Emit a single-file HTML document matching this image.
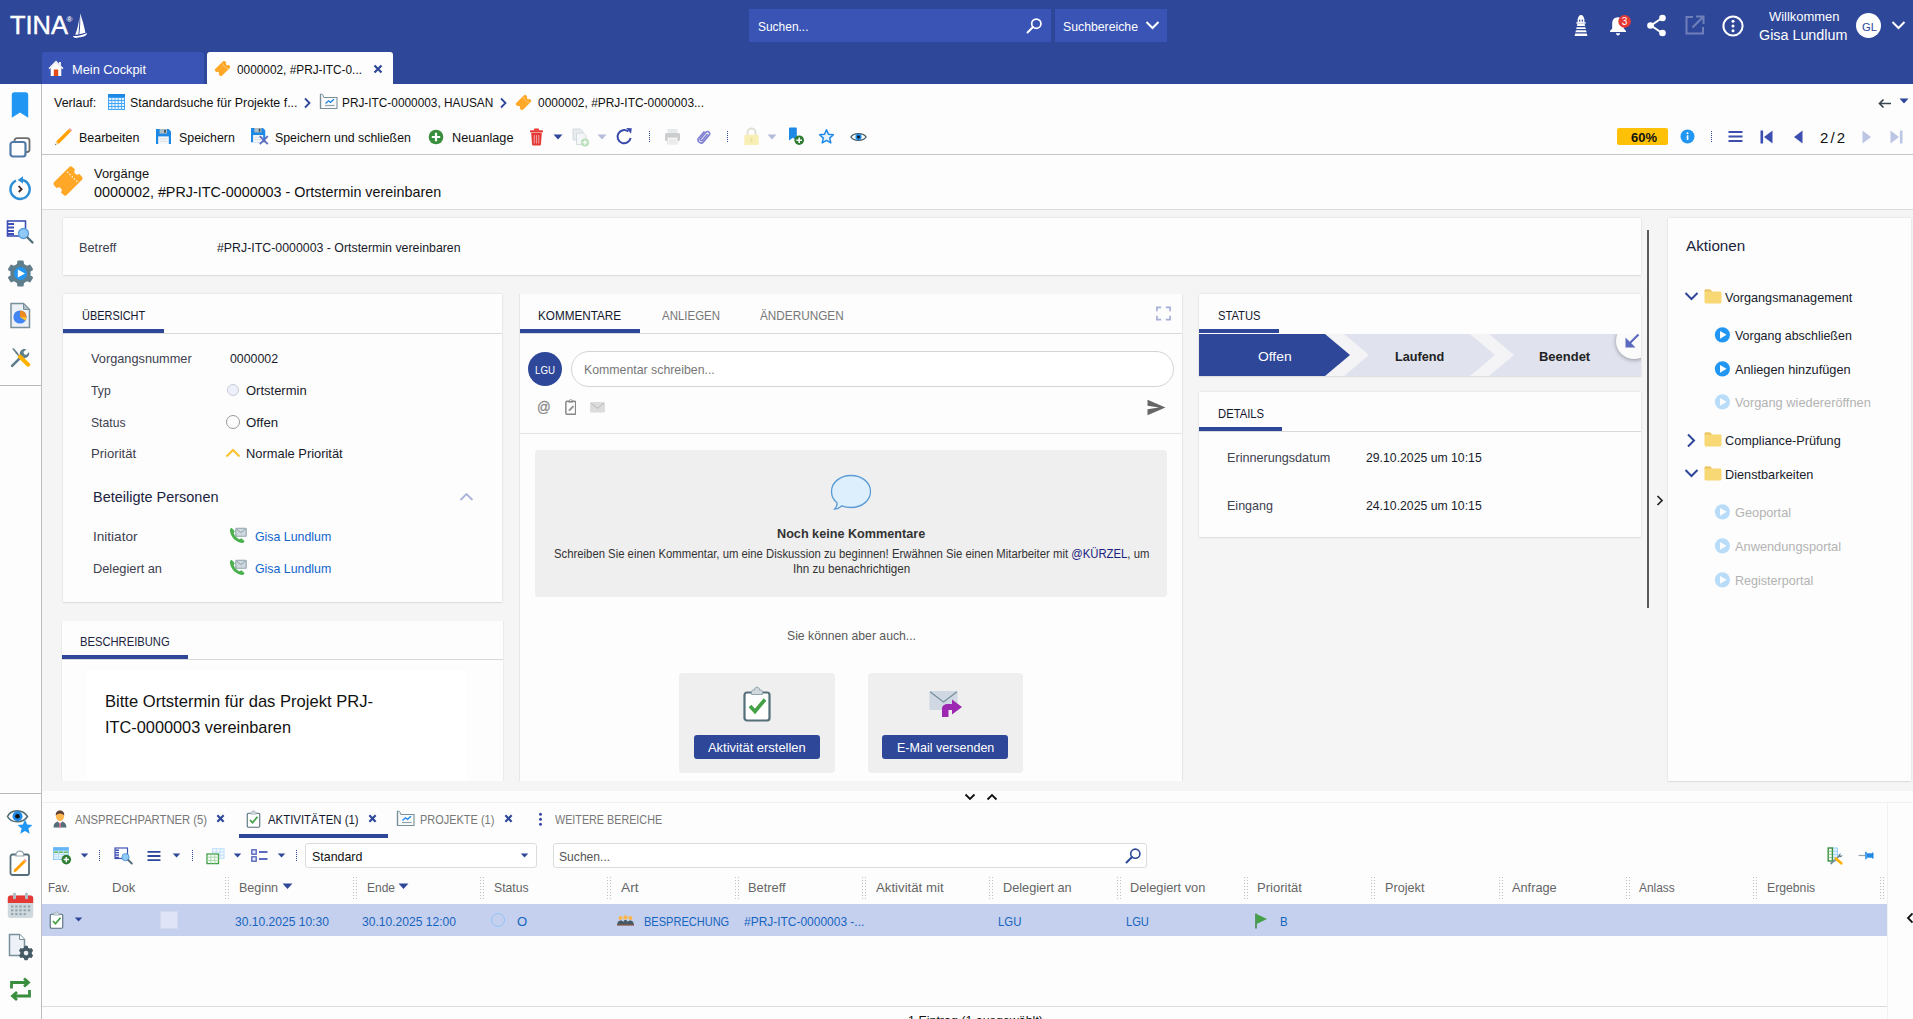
<!DOCTYPE html>
<html lang="de"><head><meta charset="utf-8"><title>TINA</title>
<style>
*{box-sizing:border-box;margin:0;padding:0}
html,body{width:1913px;height:1019px;overflow:hidden;background:#fdfdfd}
body{font-family:"Liberation Sans",sans-serif;font-size:13px;color:#111;position:relative}
.a{position:absolute}
.t{position:absolute;transform-origin:0 0;margin-top:1px;white-space:nowrap;line-height:16px;height:16px}
#hdr{left:0;top:0;width:1913px;height:84px;background:#2e4799}
#side{left:0;top:84px;width:42px;height:935px;background:#fdfdfd;border-right:1px solid #bdbdbd}
#content{left:42px;top:210px;width:1871px;height:581px;background:#f5f5f5}
.card{position:absolute;background:#fdfdfd;box-shadow:0 0 2px rgba(0,0,0,.13),0 1px 1px rgba(0,0,0,.05)}
.hl{position:absolute;height:1px;background:#d9d9d9}
.vsep{width:0;height:11px;margin-top:1px;border-left:1px dotted #2e4799}
.grip{position:absolute;top:876px;width:6px;height:24px;background-image:radial-gradient(circle,#bcbcbc 0.7px,transparent 1px);background-size:3px 3px}
.tabu{position:absolute;height:4px;background:#2e4799}
</style></head><body>
<!--HEADER-->
<svg width="0" height="0" style="position:absolute"><defs>
<g id="ticket"><g transform="rotate(-45 16 16)"><path d="M5.5 7 H26.5 A2.5 2.5 0 0 1 29 9.5 V13.2 A2.8 2.8 0 0 0 29 18.8 V22.5 A2.5 2.5 0 0 1 26.5 25 H5.5 A2.5 2.5 0 0 1 3 22.5 V18.8 A2.8 2.8 0 0 0 3 13.2 V9.5 A2.5 2.5 0 0 1 5.5 7 Z" fill="#ffa726"/><g fill="#fff6e6"><circle cx="22" cy="9.6" r=".8"/><circle cx="22" cy="12.8" r=".8"/><circle cx="22" cy="16" r=".8"/><circle cx="22" cy="19.2" r=".8"/><circle cx="22" cy="22.4" r=".8"/></g></g></g>
<g id="save"><path d="M0 0 H12.6 L15 2.4 V15 H0Z" fill="#1e88e5"/><rect x="3.6" y="0" width="7.4" height="4.6" fill="#b0bec5"/><rect x="8.2" y=".8" width="1.6" height="3" fill="#37474f"/><rect x="2.2" y="7.4" width="10.6" height="7.6" fill="#f5f7fa"/><path d="M3.5 9.8 H11.5 M3.5 12.2 H11.5" stroke="#cfd8dc" stroke-width=".8"/></g>
<g id="prj"><path d="M1.5 3 V15.5 H18 V4.5 H5" fill="#fafafa" stroke="#78909c" stroke-width="1.1"/><path d="M1.5 1 V15.5" stroke="#78909c" stroke-width="1.3"/><path d="M1.5 1 C3.5 1 4.5 2 4.5 4.5" fill="none" stroke="#78909c" stroke-width="1"/><path d="M6 12.5 H15.5" stroke="#90a4ae" stroke-width="1.2"/><path d="M6.5 10.5 L9.5 7.8 L11.5 9.3 L15 6.3" fill="none" stroke="#1e88e5" stroke-width="1.3"/></g>
<g id="gear"><path d="M10.93 4.67 L11.34 1.49 L15.66 1.49 L16.07 4.67 L19.87 6.86 L22.82 5.63 L24.98 9.37 L22.43 11.31 L22.43 15.69 L24.98 17.63 L22.82 21.37 L19.87 20.14 L16.07 22.33 L15.66 25.51 L11.34 25.51 L10.93 22.33 L7.13 20.14 L4.18 21.37 L2.02 17.63 L4.57 15.69 L4.57 11.31 L2.02 9.37 L4.18 5.63 L7.13 6.86Z" stroke-linejoin="round" stroke-width="2" stroke="inherit"/><circle cx="13.5" cy="13.5" r="9.4"/></g>
<g id="phone"><rect x="6.8" y="1.3" width="10.4" height="8" rx=".8" fill="#cfd8dc" stroke="#90a4ae" stroke-width="1.1"/><path d="M7.3 2 L12 5.6 L16.7 2" fill="none" stroke="#90a4ae" stroke-width="1"/><path d="M2.8 1 C1.5 1.3 .8 2 .9 3.2 C1.3 9.5 6.5 15 13 16 C14.3 16.1 15.2 15.3 15.5 14 L12.3 11.3 L10.5 12.3 C8 11.3 5.5 8.5 4.7 6 L5.8 4.3Z" fill="#4caf50"/></g>
<g id="clipchk"><rect x="1.5" y="6.5" width="25" height="28" rx="2.5" fill="#fff" stroke="#546e7a" stroke-width="2.2"/><path d="M8.5 8.5 V6 C8.5 4.7 9.3 4 10.5 4 H11.5 C11.5 2.3 12.5 1.2 14 1.2 C15.5 1.2 16.5 2.3 16.5 4 H17.5 C18.7 4 19.5 4.7 19.5 6 V8.5Z" fill="#cfd8dc" stroke="#90a4ae" stroke-width="1"/><path d="M7 20 L12 25.5 L22 13.5" fill="none" stroke="#43a047" stroke-width="3.6"/></g>
<g id="folder"><path d="M.5 2 C.5 1.2 1.1 .6 1.9 .6 H6.2 L8 2.6 H16.1 C16.9 2.6 17.5 3.2 17.5 4 V13 C17.5 13.8 16.9 14.4 16.1 14.4 H1.9 C1.1 14.4 .5 13.8 .5 13Z" fill="#f8d775"/><path d="M.5 2.6 V2 C.5 1.2 1.1 .6 1.9 .6 H6.2 L8 2.6Z" fill="#e9c467"/></g>
<g id="play"><circle cx="8.4" cy="7.8" r="7.6" fill="#2196f3"/><path d="M6 3.9 L12.6 7.8 L6 11.7 Z" fill="#fff"/></g>
</defs></svg>
<div class="a" id="hdr"></div>
<div class="t" style="transform:scaleX(0.9792);left:9.5px;top:9px;font-size:26px;line-height:30px;height:30px;color:#fff;-webkit-text-stroke:.45px #fff" id="logo">TINA</div>
<div class="t" style="left:66.5px;top:14.5px;font-size:8px;line-height:8px;height:8px;color:#fff;font-weight:bold">®</div>
<svg class="a" style="left:72px;top:12px" width="17" height="27" viewBox="0 0 17 27"><path d="M8 1.2 C10.5 8 12.5 15 13.4 20.8 L7.3 22.3 C8.3 15 8.5 8 8 1.2 Z" fill="#fff"/><path d="M7.4 4.7 C6.8 11 5.3 17.5 3.2 22.8 L6.4 22.4 C7.1 16 7.5 10 7.4 4.7Z" fill="#fff"/><path d="M0.9 24.1 C5.5 24.3 11 22.9 15.2 21 C14.6 23.1 13.1 24.3 10.8 24.8 L3.6 26 C2.3 25.8 1.3 25.1 0.9 24.1Z" fill="#fff"/></svg>
<div class="a" style="left:42px;top:52px;width:162px;height:32px;background:#3a54b5;border-radius:3px 3px 0 0"></div>
<div class="a" style="left:207px;top:52px;width:186px;height:32px;background:#fdfdfd;border-radius:3px 3px 0 0"></div>
<svg class="a" style="left:48px;top:60px" width="16" height="17" viewBox="0 0 16 17"><path d="M8 1 L15 8 L13.3 8 L13.3 16 L2.7 16 L2.7 8 L1 8 Z" fill="#fff"/><path d="M8 0.5 L15.5 8.2 L14.3 9.3 L8 3 L1.7 9.3 L0.5 8.2 Z" fill="#e9e9ef"/><rect x="5.8" y="9.5" width="4.4" height="6.5" fill="#e64a19"/><rect x="11" y="2" width="2" height="3.5" fill="#e9e9ef"/></svg>
<div class="t" style="transform:scaleX(0.9848);left:71.5px;top:61px;color:#fff" id="t_cockpit">Mein Cockpit</div>
<svg class="a tk" style="left:214px;top:60px" width="17" height="17" viewBox="0 0 32 32"><use href="#ticket"/></svg>
<div class="t" style="transform:scaleX(0.9104);left:236.5px;top:61px;color:#111" id="t_tab2">0000002, #PRJ-ITC-0...</div>
<svg class="a" style="left:373px;top:64px" width="10" height="10" viewBox="0 0 10 10"><path d="M1.5 1.5 L8.5 8.5 M8.5 1.5 L1.5 8.5" stroke="#2e4799" stroke-width="2.2"/></svg>
<!--search-->
<div class="a" style="left:749px;top:9px;width:302px;height:33px;background:#3a54b5"></div>
<div class="a" style="left:1055px;top:9px;width:112px;height:33px;background:#3a54b5"></div>
<div class="t" style="transform:scaleX(0.9192);left:757.5px;top:18px;color:#fff" id="t_suchen">Suchen...</div>
<svg class="a" style="left:1026px;top:17px" width="17" height="17" viewBox="0 0 17 17"><circle cx="10.3" cy="6.7" r="4.6" fill="none" stroke="#fff" stroke-width="1.7"/><path d="M7 10 L1.5 15.5" stroke="#fff" stroke-width="1.9" stroke-linecap="round"/></svg>
<div class="t" style="transform:scaleX(0.9434);left:1062.5px;top:18px;color:#fff" id="t_suchb">Suchbereiche</div>
<svg class="a" style="left:1145px;top:20px" width="15" height="11" viewBox="0 0 15 11"><path d="M1.5 2 L7.5 8 L13.5 2" fill="none" stroke="#fff" stroke-width="2"/></svg>
<!--right icons-->
<svg class="a" style="left:1572.6px;top:14px" width="16" height="24" viewBox="0 0 16 24"><path d="M5 4.9 C5 2.6 6.2 .9 8 .9 C9.8 .9 11 2.6 11 4.9Z" fill="#fff"/><rect x="4.6" y="4.6" width="6.8" height="4" fill="#fff"/><rect x="6.1" y="5.6" width="1.2" height="2" fill="#2e4799"/><rect x="8.7" y="5.6" width="1.2" height="2" fill="#2e4799"/><rect x="3.4" y="8.2" width="9.2" height="1.5" fill="#fff"/><path d="M4.4 9.7 H11.6 L14.4 22 H1.6Z" fill="#fff"/><path d="M0 12.6 H16 M0 15.7 H16 M0 18.8 H16" stroke="#2e4799" stroke-width="1.2"/></svg>
<svg class="a" style="left:1608px;top:14px" width="24" height="24" viewBox="0 0 24 24"><path d="M10 3.2 C13.8 3.2 15.8 6 15.8 9.5 L15.8 14.5 L18 17 L18 18 L2 18 L2 17 L4.2 14.5 L4.2 9.5 C4.2 6 6.2 3.2 10 3.2Z" fill="#fff"/><path d="M8 19.3 L12 19.3 C12 20.6 11.2 21.5 10 21.5 C8.8 21.5 8 20.6 8 19.3Z" fill="#fff"/><circle cx="16.6" cy="7.4" r="6.3" fill="#e53935"/></svg>
<div class="t" style="left:1621.8px;top:15px;font-size:10px;line-height:12px;height:12px;color:#fff">3</div>
<svg class="a" style="left:1645px;top:13px" width="24" height="26" viewBox="0 0 24 26"><path d="M17 5 L6 12.5 L17 20" fill="none" stroke="#fff" stroke-width="2"/><circle cx="17.5" cy="5" r="3.3" fill="#fff"/><circle cx="5.5" cy="12.5" r="3.3" fill="#fff"/><circle cx="17.5" cy="20" r="3.3" fill="#fff"/></svg>
<svg class="a" style="left:1684px;top:14.3px" width="22" height="22" viewBox="0 0 22 22"><path d="M9 3 L2.5 3 L2.5 19.5 L19 19.5 L19 13" fill="none" stroke="#6f80b9" stroke-width="2"/><path d="M12 2.5 L19.5 2.5 L19.5 10 M19 3 L8.5 13.5" fill="none" stroke="#6f80b9" stroke-width="2"/></svg>
<svg class="a" style="left:1720.5px;top:13.5px" width="24" height="24" viewBox="0 0 24 24"><circle cx="12" cy="12" r="9.6" fill="none" stroke="#fff" stroke-width="2"/><circle cx="12" cy="7.3" r="1.5" fill="#fff"/><circle cx="12" cy="12" r="1.5" fill="#fff"/><circle cx="12" cy="16.7" r="1.5" fill="#fff"/></svg>
<div class="t" style="transform:scaleX(0.9958);left:1769.0px;top:8px;color:#fff" id="t_willk">Willkommen</div>
<div class="t" style="transform:scaleX(0.9243);left:1759.3px;top:25px;font-size:15.5px;line-height:18px;height:18px;color:#fff" id="t_gisa">Gisa Lundlum</div>
<div class="a" style="left:1856px;top:13px;width:25px;height:25px;border-radius:13px;background:#fff"></div>
<div class="t" style="transform:scaleX(1.0213);left:1861.5px;top:19px;font-size:11px;line-height:14px;height:14px;color:#2e4799" id="t_gl">GL</div>
<svg class="a" style="left:1891px;top:20px" width="15" height="11" viewBox="0 0 15 11"><path d="M1.5 2 L7.5 8 L13.5 2" fill="none" stroke="#fff" stroke-width="2"/></svg>
<!--BREADCRUMB-->
<div class="t" style="transform:scaleX(0.9593);left:53.5px;top:94px" id="b1">Verlauf:</div>
<svg class="a" style="left:108px;top:94px" width="17" height="16" viewBox="0 0 17 16"><rect x="0" y="0" width="17" height="16" fill="#42a5f5"/><rect x="0" y="0" width="17" height="3.2" fill="#1e88e5"/><g fill="#e3f2fd"><rect x="1" y="4" width="2.4" height="2"/><rect x="4.2" y="4" width="2.4" height="2"/><rect x="7.4" y="4" width="2.4" height="2"/><rect x="10.6" y="4" width="2.4" height="2"/><rect x="13.8" y="4" width="2.2" height="2"/><rect x="1" y="7" width="2.4" height="2"/><rect x="4.2" y="7" width="2.4" height="2"/><rect x="7.4" y="7" width="2.4" height="2"/><rect x="10.6" y="7" width="2.4" height="2"/><rect x="13.8" y="7" width="2.2" height="2"/><rect x="1" y="10" width="2.4" height="2"/><rect x="4.2" y="10" width="2.4" height="2"/><rect x="7.4" y="10" width="2.4" height="2"/><rect x="10.6" y="10" width="2.4" height="2"/><rect x="13.8" y="10" width="2.2" height="2"/><rect x="1" y="13" width="2.4" height="2"/><rect x="4.2" y="13" width="2.4" height="2"/><rect x="7.4" y="13" width="2.4" height="2"/><rect x="10.6" y="13" width="2.4" height="2"/><rect x="13.8" y="13" width="2.2" height="2"/></g></svg>
<div class="t" style="transform:scaleX(0.9538);left:129.7px;top:94px" id="b2">Standardsuche für Projekte f...</div>
<svg class="a chev" style="left:303px;top:97px" width="9" height="12" viewBox="0 0 9 12"><path d="M2 1.5 L6.5 6 L2 10.5" fill="none" stroke="#2e4799" stroke-width="1.8"/></svg>
<svg class="a" style="left:319px;top:93px" width="19" height="17" viewBox="0 0 19 17"><use href="#prj"/></svg>
<div class="t" style="transform:scaleX(0.9105);left:342.2px;top:94px" id="b3">PRJ-ITC-0000003, HAUSAN</div>
<svg class="a chev" style="left:499px;top:97px" width="9" height="12" viewBox="0 0 9 12"><path d="M2 1.5 L6.5 6 L2 10.5" fill="none" stroke="#2e4799" stroke-width="1.8"/></svg>
<svg class="a" style="left:515px;top:94px" width="17" height="17" viewBox="0 0 32 32"><use href="#ticket"/></svg>
<div class="t" style="transform:scaleX(0.9188);left:537.5px;top:94px" id="b4">0000002, #PRJ-ITC-0000003...</div>
<svg class="a" style="left:1877px;top:97px" width="16" height="12" viewBox="0 0 16 12"><path d="M14 6.5 L3 6.5 M6.5 2.5 L2.5 6.5 L6.5 10.5" fill="none" stroke="#37474f" stroke-width="1.7"/></svg>
<svg class="a" style="left:1899px;top:98px" width="10" height="6" viewBox="0 0 10 6"><path d="M0.5 0.5 L9.5 0.5 L5 5.5Z" fill="#2e4799"/></svg>
<!--TOOLBAR-->
<svg class="a" style="left:54px;top:127px" width="19" height="19" viewBox="0 0 19 19"><path d="M14.6 2.2 L17 4.6 L4.6 17 L2.2 14.6 Z" fill="#ffa000"/><path d="M2.2 14.6 L4.6 17 L.9 18.3 Z" fill="#f3d9a8"/><path d="M.9 18.3 L1.4 16.9 L2.3 17.8Z" fill="#37474f"/><path d="M14.6 2.2 L15.8 1 L18.2 3.4 L17 4.6Z" fill="#ef9a9a"/></svg>
<div class="t" style="transform:scaleX(0.9604);left:78.7px;top:129px" id="tb1">Bearbeiten</div>
<svg class="a" style="left:156px;top:129px" width="15" height="15" viewBox="0 0 15 15"><use href="#save"/></svg>
<div class="t" style="transform:scaleX(0.9531);left:179.1px;top:129px" id="tb2">Speichern</div>
<svg class="a" style="left:251px;top:128px" width="18" height="17" viewBox="0 0 18 17"><g transform="scale(.95)"><use href="#save"/></g><path d="M8.8 8.2 L16.8 16.2 M16.8 8.2 L8.8 16.2" stroke="#5c6bc0" stroke-width="1.8"/></svg>
<div class="t" style="transform:scaleX(0.9497);left:275.1px;top:129px" id="tb3">Speichern und schließen</div>
<svg class="a" style="left:428px;top:129px" width="16" height="16" viewBox="0 0 16 16"><circle cx="8" cy="8" r="7.3" fill="#388e3c"/><path d="M8 3.8 V12.2 M3.8 8 H12.2" stroke="#fff" stroke-width="2.2"/></svg>
<div class="t" style="transform:scaleX(0.9779);left:451.5px;top:129px" id="tb4">Neuanlage</div>
<svg class="a" style="left:529px;top:128px" width="15" height="18" viewBox="0 0 15 18"><path d="M2.2 5 L12.8 5 L12 16 C12 17 11.3 17.5 10.5 17.5 L4.5 17.5 C3.7 17.5 3 17 3 16 Z" fill="#e53935"/><rect x="1" y="2.2" width="13" height="2.3" rx=".8" fill="#e53935"/><rect x="5" y=".6" width="5" height="2" rx=".6" fill="#e53935"/><path d="M5.3 7 V15.5 M7.5 7 V15.5 M9.7 7 V15.5" stroke="#ef9a9a" stroke-width="1.1"/></svg>
<svg class="a" style="left:553px;top:134px" width="10" height="6" viewBox="0 0 10 6"><path d="M0.5 0.5 L9.5 0.5 L5 5.5Z" fill="#2e4799"/></svg>
<svg class="a" style="left:572px;top:128px" width="18" height="19" viewBox="0 0 18 19" opacity=".45"><path d="M1 1 H8.5 L11 3.5 V12 H1Z" fill="#cfd8dc" stroke="#90a4ae" stroke-width=".8"/><path d="M4.5 5 H11.5 L14 7.5 V16.5 H4.5Z" fill="#eceff1" stroke="#90a4ae" stroke-width=".8"/><circle cx="13" cy="14.5" r="4" fill="#66bb6a"/><path d="M13 12.3 V16.7 M10.8 14.5 H15.2" stroke="#fff" stroke-width="1.3"/></svg>
<svg class="a" style="left:597px;top:134px" width="10" height="6" viewBox="0 0 10 6"><path d="M0.5 0.5 L9.5 0.5 L5 5.5Z" fill="#b4bcd9"/></svg>
<svg class="a" style="left:615px;top:127px" width="19" height="19" viewBox="0 0 19 19"><path d="M15.6 11 A6.6 6.6 0 1 1 13.3 4.6" fill="none" stroke="#3949ab" stroke-width="2"/><path d="M11.2 1 L16.8 1.2 L16 6.8 Z" fill="#3949ab"/></svg>
<div class="a vsep" style="left:649px;top:130px"></div>
<svg class="a" style="left:664px;top:128px" width="17" height="17" viewBox="0 0 17 17" opacity=".5"><rect x="3.5" y="1" width="10" height="5" fill="#cfd8dc"/><rect x="1" y="5" width="15" height="8" rx="1.5" fill="#9e9e9e"/><rect x="3.5" y="9.5" width="10" height="6.5" fill="#eceff1" stroke="#bdbdbd" stroke-width=".6"/><path d="M5 12 H12 M5 14 H12" stroke="#bdbdbd" stroke-width=".8"/></svg>
<svg class="a" style="left:695px;top:128px" width="18" height="17" viewBox="0 0 18 17"><g transform="rotate(40 9 8.5)" fill="none" stroke="#7e7fd0" stroke-width="1.6" stroke-linecap="round"><path d="M6 5 V13 A3 3 0 0 0 12 13 V3.5 A2.2 2.2 0 0 0 7.8 3.5 V12.5 A1.2 1.2 0 0 0 10.2 12.5 V5"/></g></svg>
<div class="a vsep" style="left:727px;top:130px"></div>
<svg class="a" style="left:743px;top:127px" width="17" height="19" viewBox="0 0 17 19" opacity=".55"><path d="M4.5 8 V5.5 A4 4 0 0 1 12.5 5.5 V8" fill="none" stroke="#c9c9b5" stroke-width="2"/><rect x="1.3" y="7.8" width="14.4" height="10.2" rx="1.2" fill="#f6e47a"/><rect x="7.6" y="10.5" width="1.8" height="4.5" fill="#d9c95a"/></svg>
<svg class="a" style="left:767px;top:134px" width="10" height="6" viewBox="0 0 10 6"><path d="M0.5 0.5 L9.5 0.5 L5 5.5Z" fill="#b4bcd9"/></svg>
<svg class="a" style="left:787px;top:127px" width="19" height="19" viewBox="0 0 19 19"><path d="M2 1.3 C2 .8 2.4 .4 3 .4 L8.8 .4 C9.4 .4 9.8 .8 9.8 1.3 L9.8 13.5 L5.9 10.8 L2 13.5Z" fill="#1e88e5"/><circle cx="12.2" cy="13.2" r="4.8" fill="#2e7d32"/><path d="M12.2 10.4 V16 M9.4 13.2 H15" stroke="#fff" stroke-width="1.5"/></svg>
<svg class="a" style="left:818px;top:128px" width="17" height="17" viewBox="0 0 17 17"><path d="M8.5 1.8 L10.5 6.3 L15.4 6.8 L11.7 10.1 L12.8 14.9 L8.5 12.4 L4.2 14.9 L5.3 10.1 L1.6 6.8 L6.5 6.3Z" fill="#e3f2fd" stroke="#1e88e5" stroke-width="1.5" stroke-linejoin="round"/></svg>
<svg class="a" style="left:850px;top:130.5px" width="17" height="12" viewBox="0 0 19 13"><path d="M1 6.5 C4 1.5 15 1.5 18 6.5 C15 11.5 4 11.5 1 6.5Z" fill="#fff" stroke="#455a64" stroke-width="1.5"/><circle cx="9.5" cy="6.5" r="3.5" fill="#1e88e5"/><circle cx="9.5" cy="6.5" r="1.6" fill="#111"/></svg>
<!--toolbar right-->
<div class="a" style="left:1617px;top:128px;width:51px;height:17px;background:#ffc107;border-radius:2px"></div>
<div class="t" style="transform:scaleX(0.9988);left:1630.5px;top:129px;font-weight:bold;color:#111" id="tb60">60%</div>
<svg class="a" style="left:1680px;top:129px" width="15" height="15" viewBox="0 0 15 15"><circle cx="7.5" cy="7.5" r="7" fill="#2196f3"/><rect x="6.7" y="6.3" width="1.7" height="4.6" fill="#fff"/><circle cx="7.5" cy="4.3" r="1" fill="#fff"/></svg>
<div class="a vsep" style="left:1711px;top:130px"></div>
<svg class="a" style="left:1728px;top:130px" width="15" height="13" viewBox="0 0 15 13"><path d="M.5 2 H14.5 M.5 6.5 H14.5 M.5 11 H14.5" stroke="#3c4fb0" stroke-width="1.8"/></svg>
<svg class="a" style="left:1760px;top:130px" width="13" height="14" viewBox="0 0 13 14"><rect x=".5" y=".5" width="2.6" height="13" fill="#3c4fb0"/><path d="M12.5 .5 V13.5 L4 7Z" fill="#3c4fb0"/></svg>
<svg class="a" style="left:1793px;top:130px" width="10" height="14" viewBox="0 0 10 14"><path d="M9.5 .5 V13.5 L1 7Z" fill="#3c4fb0"/></svg>
<div class="t" style="left:1820px;top:128px;font-size:15px;line-height:18px;height:18px;color:#111;letter-spacing:2.1px" id="tb22">2/2</div>
<svg class="a" style="left:1862px;top:130px" width="10" height="14" viewBox="0 0 10 14"><path d="M.5 .5 V13.5 L9 7Z" fill="#bcc5e3"/></svg>
<svg class="a" style="left:1890px;top:130px" width="13" height="14" viewBox="0 0 13 14"><rect x="9.9" y=".5" width="2.6" height="13" fill="#bcc5e3"/><path d="M.5 .5 V13.5 L9 7Z" fill="#bcc5e3"/></svg>
<div class="hl" style="left:42px;top:154px;width:1871px;background:#c4c4c4"></div>
<!--TITLE-->
<svg class="a" style="left:52px;top:165px" width="32" height="32" viewBox="0 0 32 32"><use href="#ticket"/></svg>
<div class="t" style="transform:scaleX(0.9915);left:94.1px;top:165px;color:#111" id="ti1">Vorgänge</div>
<div class="t" style="transform:scaleX(0.9573);left:94.1px;top:182px;font-size:15px;line-height:18px;height:18px;color:#111" id="ti2">0000002, #PRJ-ITC-0000003 - Ortstermin vereinbaren</div>
<div class="hl" style="left:42px;top:209px;width:1871px;background:#dcdcdc"></div>
<!--SIDE-->
<div class="a" id="side"></div>
<div class="hl" style="left:0;top:385px;width:41px;background:#b9b9b9"></div>
<div class="hl" style="left:0;top:793px;width:41px;background:#b9b9b9"></div>
<!--side icons top-->
<svg class="a" style="left:11px;top:92px" width="18" height="26" viewBox="0 0 18 26"><path d="M.8 2.8 C.8 1.2 1.8 .2 3.4 .2 L14.6 .2 C16.2 .2 17.2 1.2 17.2 2.8 L17.2 25.8 L9 20.6 L.8 25.8Z" fill="#2196f3"/></svg>
<svg class="a" style="left:9px;top:137px" width="22" height="21" viewBox="0 0 22 21"><rect x="5.5" y="1.2" width="15" height="13.8" rx="2.5" fill="#fdfdfd" stroke="#6e6e6e" stroke-width="1.8"/><rect x="1.5" y="5" width="15" height="14.5" rx="2.5" fill="#fdfdfd" stroke="#4f7aa8" stroke-width="2.2"/></svg>
<svg class="a" style="left:8px;top:176px" width="25" height="26" viewBox="0 0 25 26"><path d="M8 4.6 A9.6 9.6 0 1 0 13.5 3.8" fill="none" stroke="#2f8fd6" stroke-width="2.5"/><path d="M15 .2 L9.6 3.9 L15 7.6Z" fill="#2f8fd6"/><path d="M10.6 10 L13.6 13.2 L10.8 16" fill="none" stroke="#3e2723" stroke-width="1.8"/></svg>
<svg class="a" style="left:6px;top:219px" width="29" height="26" viewBox="0 0 29 26"><rect x="1.5" y="2" width="18" height="15" fill="#fff" stroke="#3f51b5" stroke-width="1.6"/><path d="M2 5 H8 M2 8.5 H8 M2 12 H8 M2 15 H8" stroke="#3f51b5" stroke-width="2"/><circle cx="17.5" cy="14.5" r="5" fill="#90caf9" stroke="#5c9bd6" stroke-width="1.3"/><path d="M21.5 18.5 L26.5 23.5" stroke="#546e7a" stroke-width="2.4" stroke-linecap="round"/></svg>
<svg class="a" style="left:7px;top:260px" width="27" height="27" viewBox="0 0 27 27"><use href="#gear" fill="#607d8b" stroke="#607d8b"/><circle cx="13.5" cy="13.5" r="6.5" fill="#2196f3"/><path d="M10.8 9.6 L18 13.5 L10.8 17.4Z" fill="#fff"/></svg>
<svg class="a" style="left:10px;top:302px" width="21" height="27" viewBox="0 0 21 27"><path d="M1 1.5 H13.5 L19.5 7.5 V25.5 H1Z" fill="#edf1f7" stroke="#78909c" stroke-width="1.5"/><path d="M13.5 1.5 V7.5 H19.5Z" fill="#b0bec5" stroke="#78909c" stroke-width="1"/><circle cx="10" cy="15" r="6.6" fill="#4285f4"/><path d="M10 15 L10 8.4 A6.6 6.6 0 0 1 16.6 15Z" fill="#ef8a1f"/><path d="M10 15 L16.6 15 A6.6 6.6 0 0 1 15.4 18.8Z" fill="#fbc02d"/></svg>
<svg class="a" style="left:10px;top:347px" width="21" height="21" viewBox="0 0 25 25"><path d="M2.5 22.5 L13 12" stroke="#607d8b" stroke-width="3.2" stroke-linecap="round"/><path d="M12 10 C11 7 12.5 3.5 16 2.5 C17 2.2 18.5 2.3 19.3 2.7 L16 6 L16.8 8.6 L19.4 9.4 L22.7 6.1 C23.3 8 22.8 10.5 21 12 C19 13.5 16.5 13.6 15 13Z" fill="#607d8b"/><path d="M2.5 2 L4.5 1.5 L9.5 7 L8 8.5Z" fill="#607d8b"/><path d="M7 6.5 L12.5 12" stroke="#607d8b" stroke-width="1.8"/><path d="M12 11.5 L21.5 21" stroke="#ffb300" stroke-width="5" stroke-linecap="round"/></svg>
<!--side icons bottom-->
<svg class="a" style="left:6px;top:808px" width="29" height="28" viewBox="0 0 29 28"><path d="M1.5 8.5 C5 1 17 1 21.5 8.5 C17 15.5 5 15.5 1.5 8.5Z" fill="#fff" stroke="#546e7a" stroke-width="1.6"/><circle cx="11.5" cy="8.3" r="5" fill="#1e88e5"/><circle cx="11.5" cy="8.3" r="2.3" fill="#111"/><path d="M19 11.5 L21.1 16.4 L26.5 16.9 L22.4 20.4 L23.7 25.7 L19 22.9 L14.3 25.7 L15.6 20.4 L11.5 16.9 L16.9 16.4Z" fill="#2196f3"/></svg>
<svg class="a" style="left:9px;top:850px" width="22" height="27" viewBox="0 0 22 27"><rect x="1.5" y="4.5" width="18.5" height="20.5" rx="2" fill="#fff" stroke="#546e7a" stroke-width="1.8"/><path d="M7 4.5 C7 2.5 8.5 1.2 10.8 1.2 C13 1.2 14.5 2.5 14.5 4.5 L14.5 6 L7 6Z" fill="#fff" stroke="#90a4ae" stroke-width="1.2"/><path d="M5.2 19.5 L14.8 9.9 L16.8 11.9 L7.2 21.5 L4.6 22.2Z" fill="#ffa000"/><path d="M14.8 9.9 L15.9 8.8 L17.9 10.8 L16.8 11.9Z" fill="#ef9a9a"/></svg>
<svg class="a" style="left:7px;top:892px" width="27" height="27" viewBox="0 0 27 27"><rect x=".8" y="3.5" width="25.4" height="22.5" rx="2.5" fill="#cfd8dc"/><path d="M.8 11 V6 C.8 4.6 1.9 3.5 3.3 3.5 H23.7 C25.1 3.5 26.2 4.6 26.2 6 V11Z" fill="#e53935"/><rect x="6" y=".8" width="3" height="6.4" rx="1.2" fill="#b0bec5"/><rect x="18" y=".8" width="3" height="6.4" rx="1.2" fill="#b0bec5"/><g fill="#90a4ae"><rect x="4" y="13.5" width="2.3" height="2"/><rect x="8.2" y="13.5" width="2.3" height="2"/><rect x="12.4" y="13.5" width="2.3" height="2"/><rect x="16.6" y="13.5" width="2.3" height="2"/><rect x="20.8" y="13.5" width="2.3" height="2"/><rect x="4" y="17.3" width="2.3" height="2"/><rect x="8.2" y="17.3" width="2.3" height="2"/><rect x="12.4" y="17.3" width="2.3" height="2"/><rect x="16.6" y="17.3" width="2.3" height="2"/><rect x="20.8" y="17.3" width="2.3" height="2"/><rect x="4" y="21.1" width="2.3" height="2"/><rect x="8.2" y="21.1" width="2.3" height="2"/><rect x="12.4" y="21.1" width="2.3" height="2"/><rect x="16.6" y="21.1" width="2.3" height="2"/></g></svg>
<svg class="a" style="left:8px;top:933px" width="26" height="28" viewBox="0 0 26 28"><path d="M1.5 1.5 H11.5 L16.5 6.5 V22.5 H1.5Z" fill="#eef1f7" stroke="#78909c" stroke-width="1.5"/><path d="M11.5 1.5 V6.5 H16.5" fill="#fff" stroke="#78909c" stroke-width="1"/><g transform="translate(10.5 12.5) scale(.56)"><use href="#gear" fill="#455a64" stroke="#455a64"/><circle cx="13.5" cy="13.5" r="4.2" fill="#eef1f7"/></g></svg>
<svg class="a" style="left:9px;top:977px" width="23" height="25" viewBox="0 0 23 25"><path d="M2.5 11.5 V5.5 H18 M15 1.5 L19.5 5.5 L15 9.5" fill="none" stroke="#388e3c" stroke-width="2.8"/><path d="M20.5 13 V19 H5 M8 15 L3.5 19 L8 23" fill="none" stroke="#388e3c" stroke-width="2.8"/></svg>
<!--CONTENT-->
<div class="a" id="content"></div>
<!--Betreff card-->
<div class="card" style="left:63px;top:218px;width:1578px;height:57px"></div>
<div class="t" style="transform:scaleX(0.9826);left:78.6px;top:239px;color:#3d4150" id="c_betr">Betreff</div>
<div class="t" style="transform:scaleX(0.9497);left:217.2px;top:239px;color:#181b2b" id="c_betrv">#PRJ-ITC-0000003 - Ortstermin vereinbaren</div>
<!--Uebersicht card-->
<div class="card" style="left:63px;top:294px;width:439px;height:308px"></div>
<div class="t" style="transform:scaleX(0.8413);left:81.7px;top:307px;color:#14182e" id="c_ueb">ÜBERSICHT</div>
<div class="hl" style="left:63px;top:333px;width:439px"></div>
<div class="tabu" style="left:63px;top:329px;width:101px"></div>
<div class="t" style="transform:scaleX(0.9812);left:90.5px;top:350px;color:#3d4150" id="c_vn">Vorgangsnummer</div>
<div class="t" style="transform:scaleX(0.9501);left:229.7px;top:350px;color:#181b2b" id="c_vnv">0000002</div>
<div class="t" style="transform:scaleX(0.9395);left:90.5px;top:382px;color:#3d4150" id="c_typ">Typ</div>
<div class="a" style="left:226.5px;top:383.5px;width:12px;height:12px;border-radius:6px;border:1.5px solid #c8cbd6;background:#eef1fb"></div>
<div class="t" style="transform:scaleX(0.9988);left:246.4px;top:382px;color:#181b2b" id="c_typv">Ortstermin</div>
<div class="t" style="transform:scaleX(0.9360);left:90.5px;top:414px;color:#3d4150" id="c_st">Status</div>
<div class="a" style="left:225.5px;top:414.5px;width:14px;height:14px;border-radius:7px;border:1.8px solid #9a9a9a;background:#fdfdfd"></div>
<div class="t" style="transform:scaleX(1.0170);left:246.4px;top:414px;color:#181b2b" id="c_stv">Offen</div>
<div class="t" style="transform:scaleX(1.0090);left:90.5px;top:445px;color:#3d4150" id="c_pr">Priorität</div>
<svg class="a" style="left:225px;top:448px" width="16" height="10" viewBox="0 0 16 10"><path d="M1.5 8.5 L8 2 L14.5 8.5" fill="none" stroke="#fbc02d" stroke-width="2.1"/></svg>
<div class="t" style="transform:scaleX(0.9915);left:246.4px;top:445px;color:#181b2b" id="c_prv">Normale Priorität</div>
<div class="t" style="transform:scaleX(0.9647);left:92.5px;top:487px;font-size:15px;line-height:18px;height:18px;color:#1a2340" id="c_bp">Beteiligte Personen</div>
<svg class="a" style="left:459px;top:492px" width="15" height="10" viewBox="0 0 15 10"><path d="M1.5 8 L7.5 2 L13.5 8" fill="none" stroke="#a9b3d9" stroke-width="1.8"/></svg>
<div class="t" style="transform:scaleX(1.0436);left:92.5px;top:528px;color:#3d4150" id="c_ini">Initiator</div>
<svg class="a" style="left:229px;top:527px" width="18" height="17" viewBox="0 0 18 17"><use href="#phone"/></svg>
<div class="t" style="transform:scaleX(0.9499);left:254.8px;top:528px;color:#1265cb" id="c_iniv">Gisa Lundlum</div>
<div class="t" style="transform:scaleX(0.9842);left:92.5px;top:560px;color:#3d4150" id="c_del">Delegiert an</div>
<svg class="a" style="left:229px;top:559px" width="18" height="17" viewBox="0 0 18 17"><use href="#phone"/></svg>
<div class="t" style="transform:scaleX(0.9499);left:254.8px;top:560px;color:#1265cb" id="c_delv">Gisa Lundlum</div>
<!--Beschreibung card-->
<div class="card" style="left:61px;top:621px;width:443px;height:160px;box-shadow:none;border-left:1px solid #ececec;border-right:1px solid #ececec"></div>
<div class="t" style="transform:scaleX(0.8622);left:80.1px;top:633px;color:#1a2340" id="c_besch">BESCHREIBUNG</div>
<div class="hl" style="left:62px;top:659px;width:441px"></div>
<div class="tabu" style="left:62px;top:655px;width:126px"></div>
<div class="a" style="left:87px;top:670px;width:380px;height:111px;background:#fff"></div>
<div class="t" style="transform:scaleX(0.9749);left:104.5px;top:690px;font-size:17px;line-height:22px;height:22px;color:#111" id="c_d1">Bitte Ortstermin für das Projekt PRJ-</div>
<div class="t" style="transform:scaleX(0.9601);left:104.5px;top:716px;font-size:17px;line-height:22px;height:22px;color:#111" id="c_d2">ITC-0000003 vereinbaren</div>
<!--Kommentare card-->
<div class="card" style="left:519px;top:294px;width:664px;height:487px;box-shadow:none;border-left:1px solid #e6e6e6;border-right:1px solid #e6e6e6"></div>
<div class="t" style="transform:scaleX(0.9011);left:538.4px;top:307px;color:#14182e" id="k_t1">KOMMENTARE</div>
<div class="t" style="transform:scaleX(0.8821);left:661.7px;top:307px;color:#777" id="k_t2">ANLIEGEN</div>
<div class="t" style="transform:scaleX(0.9052);left:759.8px;top:307px;color:#777" id="k_t3">ÄNDERUNGEN</div>
<div class="hl" style="left:520px;top:333px;width:662px"></div>
<div class="tabu" style="left:520px;top:329px;width:120px"></div>
<svg class="a" style="left:1156px;top:306px" width="15" height="15" viewBox="0 0 16 15"><path d="M1 5 V1 H5.5 M10.5 1 H15 V5 M15 10 V14 H10.5 M5.5 14 H1 V10" fill="none" stroke="#a5b0d8" stroke-width="1.8"/></svg>
<div class="a" style="left:528px;top:352px;width:34px;height:34px;border-radius:17px;background:#2e4799"></div>
<div class="t" style="transform:scaleX(0.8840);left:535.0px;top:362px;font-size:11px;line-height:14px;height:14px;color:#fff" id="k_lgu">LGU</div>
<div class="a" style="left:571px;top:351px;width:603px;height:36px;border-radius:18px;border:1px solid #d4d4d4;background:#fff"></div>
<div class="t" style="transform:scaleX(0.9477);left:584.2px;top:361px;color:#777" id="k_ph">Kommentar schreiben...</div>
<div class="t" style="transform:scaleX(0.9298);left:536.5px;top:398px;font-size:14.5px;color:#8a8a8a;-webkit-text-stroke:.3px #8a8a8a" id="k_at">@</div>
<svg class="a" style="left:564.6px;top:398.6px" width="11.5" height="16.6" viewBox="0 0 12 17"><rect x=".9" y="2.2" width="10.2" height="13.6" rx="1.2" fill="#fdfdfd" stroke="#858585" stroke-width="1.5"/><circle cx="6" cy="1.6" r="1.2" fill="#fdfdfd" stroke="#8a8a8a" stroke-width=".9"/><path d="M3.5 2.9 H8.5" stroke="#858585" stroke-width="1.4"/><path d="M3.6 12.6 L4 10.8 L8.2 6.6 L9.6 8 L5.4 12.2Z" fill="#8f8f8f"/></svg>
<svg class="a" style="left:590px;top:402px" width="15" height="11" viewBox="0 0 15 11"><rect x="0" y="0" width="15" height="10.6" rx="1.6" fill="#dcdcdc"/><path d="M1 1.2 L7.5 6.3 L14 1.2" fill="none" stroke="#b8b8b8" stroke-width="1"/></svg>
<svg class="a" style="left:1147px;top:399px" width="19" height="17" viewBox="0 0 19 17"><path d="M.5 .8 L18.5 8.5 L.5 16.2 L.5 10.2 L12 8.5 L.5 6.8Z" fill="#666"/></svg>
<div class="hl" style="left:520px;top:433px;width:662px;background:#e4e4e4"></div>
<div class="a" style="left:535px;top:450px;width:632px;height:147px;background:#efefef;border-radius:4px"></div>
<svg class="a" style="left:830px;top:474px" width="42" height="37" viewBox="0 0 42 37"><path d="M21 1.5 C32 1.5 40.5 8.5 40.5 17.5 C40.5 26.5 32 33.5 21 33.5 C17.5 33.5 14.5 33 12 31.8 C10 33.8 7.5 35 4.5 35.2 C6.5 33.2 7.3 31 7 28.8 C3.5 26 1.5 22 1.5 17.5 C1.5 8.5 10 1.5 21 1.5Z" fill="#ddeefc" stroke="#5b9bd5" stroke-width="1.3"/></svg>
<div class="t" style="transform:scaleX(0.9722);left:777.1px;top:525px;font-weight:bold;color:#333" id="k_nk">Noch keine Kommentare</div>
<div class="t" style="transform:scaleX(0.9433);left:553.5px;top:545px;font-size:12px;color:#333" id="k_l1">Schreiben Sie einen Kommentar, um eine Diskussion zu beginnen! Erwähnen Sie einen Mitarbeiter mit <span style="color:#1a237e">@KÜRZEL</span>, um</div>
<div class="t" style="transform:scaleX(0.9706);left:792.6px;top:560px;font-size:12px;color:#333" id="k_l2">Ihn zu benachrichtigen</div>
<div class="t" style="transform:scaleX(0.9394);left:786.5px;top:627px;color:#5a5a5a" id="k_sk">Sie können aber auch...</div>
<div class="a" style="left:679px;top:673px;width:156px;height:100px;background:#efefef;border-radius:4px"></div>
<div class="a" style="left:868px;top:673px;width:155px;height:100px;background:#efefef;border-radius:4px"></div>
<div class="a" style="left:694px;top:735px;width:126px;height:24px;background:#2e4799;border-radius:3px"></div>
<div class="a" style="left:882px;top:735px;width:126px;height:24px;background:#2e4799;border-radius:3px"></div>
<div class="t" style="transform:scaleX(0.9942);left:708.2px;top:739px;color:#fff" id="k_b1">Aktivität erstellen</div>
<div class="t" style="transform:scaleX(0.9619);left:896.5px;top:739px;color:#fff" id="k_b2">E-Mail versenden</div>
<svg class="a" style="left:743px;top:686px" width="28" height="36" viewBox="0 0 28 36"><use href="#clipchk"/></svg>
<svg class="a" style="left:929px;top:690px" width="34" height="28" viewBox="0 0 34 28"><rect x=".5" y="1" width="28" height="19" rx="1.5" fill="#cfd8e3"/><path d="M1 1.8 L14.5 12 L28 1.8" fill="none" stroke="#78909c" stroke-width="1.3"/><path d="M13 27 V19 C13 15.5 15.5 14 19 14 H23 V9.5 L33 17 L23 24.5 V20 H19.5 V27Z" fill="#9c27b0"/></svg>
<!--Status card-->
<div class="card" style="left:1199px;top:294px;width:442px;height:82px"></div>
<div class="t" style="transform:scaleX(0.8610);left:1217.7px;top:307px;color:#14182e" id="s_t">STATUS</div>
<div class="tabu" style="left:1199px;top:329px;width:80px"></div>
<svg class="a" style="left:1199px;top:334px" width="442" height="42" viewBox="0 0 442 42"><rect x="0" y="0" width="442" height="42" fill="#f4f4f7"/><path d="M0 0 H126 L151 21 L126 42 H0Z" fill="#2e4799"/><path d="M145 0 H271 L296 21 L271 42 H145 L170 21Z" fill="#e0e3ee"/><path d="M290 0 H442 V42 H290 L315 21Z" fill="#e0e3ee"/></svg>
<div class="t" style="transform:scaleX(1.0646);left:1257.5px;top:348px;color:#fff" id="s_o">Offen</div>
<div class="t" style="transform:scaleX(0.9750);left:1394.7px;top:348px;font-weight:bold;color:#222" id="s_l">Laufend</div>
<div class="t" style="transform:scaleX(0.9981);left:1538.8px;top:348px;font-weight:bold;color:#222" id="s_b">Beendet</div>
<div class="a" style="left:1199px;top:334px;width:442px;height:42px;overflow:hidden"><div class="a" style="left:417px;top:-11px;width:36px;height:36px;border-radius:18px;background:#fbfbfb;box-shadow:0 1px 4px rgba(0,0,0,.35)"></div><svg class="a" style="left:425px;top:-1px" width="16" height="16" viewBox="0 0 16 16"><path d="M14.5 1.5 L4 12" fill="none" stroke="#5c6bc0" stroke-width="2.2"/><path d="M1.5 4.5 V14.5 H11.5Z" fill="#5c6bc0"/></svg></div>
<!--Details card-->
<div class="card" style="left:1199px;top:392px;width:442px;height:145px"></div>
<div class="t" style="transform:scaleX(0.8662);left:1217.7px;top:405px;color:#14182e" id="d_t">DETAILS</div>
<div class="hl" style="left:1199px;top:431px;width:442px"></div>
<div class="tabu" style="left:1199px;top:427px;width:83px"></div>
<div class="t" style="transform:scaleX(0.9714);left:1227.0px;top:449px;color:#3d4150" id="d_e">Erinnerungsdatum</div>
<div class="t" style="transform:scaleX(0.9415);left:1365.8px;top:449px;color:#181b2b" id="d_ev">29.10.2025 um 10:15</div>
<div class="t" style="transform:scaleX(0.9640);left:1227.0px;top:497px;color:#3d4150" id="d_g">Eingang</div>
<div class="t" style="transform:scaleX(0.9415);left:1365.8px;top:497px;color:#181b2b" id="d_gv">24.10.2025 um 10:15</div>
<div class="a" style="left:1647px;top:230px;width:2px;height:378px;background:#5a5a5a"></div>
<svg class="a" style="left:1656px;top:495px" width="8" height="11" viewBox="0 0 8 11"><path d="M1.5 1 L6 5.5 L1.5 10" fill="none" stroke="#222" stroke-width="1.7"/></svg>
<!--Aktionen-->
<div class="card" style="left:1668px;top:218px;width:243px;height:563px"></div>
<div class="t" style="transform:scaleX(1.0158);left:1685.6px;top:236px;font-size:15px;line-height:18px;height:18px;color:#1a2340" id="a_t">Aktionen</div>
<svg class="a" style="left:1684px;top:291px" width="15" height="11" viewBox="0 0 15 11"><path d="M1.5 2 L7.5 8 L13.5 2" fill="none" stroke="#2e4799" stroke-width="2"/></svg>
<svg class="a" style="left:1704px;top:289px" width="18" height="15" viewBox="0 0 18 15"><use href="#folder"/></svg>
<div class="t" style="transform:scaleX(0.9731);left:1725.0px;top:289px;color:#181b2b" id="a_1">Vorgangsmanagement</div>
<svg class="a" style="left:1714px;top:327px" width="16" height="16" viewBox="0 0 16 16"><use href="#play"/></svg>
<div class="t" style="transform:scaleX(0.9562);left:1734.7px;top:327px;color:#181b2b" id="a_2">Vorgang abschließen</div>
<svg class="a" style="left:1714px;top:361px" width="16" height="16" viewBox="0 0 16 16"><use href="#play"/></svg>
<div class="t" style="transform:scaleX(0.9811);left:1734.7px;top:361px;color:#181b2b" id="a_3">Anliegen hinzufügen</div>
<svg class="a" style="left:1714px;top:394px" width="16" height="16" viewBox="0 0 16 16" opacity=".3"><use href="#play"/></svg>
<div class="t" style="transform:scaleX(0.9854);left:1734.7px;top:394px;color:#b3b3b3" id="a_4">Vorgang wiedereröffnen</div>
<svg class="a" style="left:1686px;top:433px" width="11" height="15" viewBox="0 0 11 15"><path d="M2 1.5 L8 7.5 L2 13.5" fill="none" stroke="#2e4799" stroke-width="2"/></svg>
<svg class="a" style="left:1704px;top:432px" width="18" height="15" viewBox="0 0 18 15"><use href="#folder"/></svg>
<div class="t" style="transform:scaleX(0.9762);left:1725.0px;top:432px;color:#181b2b" id="a_5">Compliance-Prüfung</div>
<svg class="a" style="left:1684px;top:468px" width="15" height="11" viewBox="0 0 15 11"><path d="M1.5 2 L7.5 8 L13.5 2" fill="none" stroke="#2e4799" stroke-width="2"/></svg>
<svg class="a" style="left:1704px;top:466px" width="18" height="15" viewBox="0 0 18 15"><use href="#folder"/></svg>
<div class="t" style="transform:scaleX(0.9775);left:1725.0px;top:466px;color:#181b2b" id="a_6">Dienstbarkeiten</div>
<svg class="a" style="left:1714px;top:504px" width="16" height="16" viewBox="0 0 16 16" opacity=".3"><use href="#play"/></svg>
<div class="t" style="transform:scaleX(0.9826);left:1734.7px;top:504px;color:#b3b3b3" id="a_7">Geoportal</div>
<svg class="a" style="left:1714px;top:538px" width="16" height="16" viewBox="0 0 16 16" opacity=".3"><use href="#play"/></svg>
<div class="t" style="transform:scaleX(0.9842);left:1734.7px;top:538px;color:#b3b3b3" id="a_8">Anwendungsportal</div>
<svg class="a" style="left:1714px;top:572px" width="16" height="16" viewBox="0 0 16 16" opacity=".3"><use href="#play"/></svg>
<div class="t" style="transform:scaleX(0.9662);left:1734.7px;top:572px;color:#b3b3b3" id="a_9">Registerportal</div>
<!--SPLITTER-->
<div class="a" style="left:42px;top:791px;width:1871px;height:228px;background:#fdfdfd"></div>
<div class="hl" style="left:42px;top:802px;width:1871px;background:#f1f1f1"></div>
<svg class="a" style="left:964px;top:793px" width="12" height="8" viewBox="0 0 12 8"><path d="M1.5 1.5 L6 6 L10.5 1.5" fill="none" stroke="#111" stroke-width="1.8"/></svg>
<svg class="a" style="left:986px;top:793px" width="12" height="8" viewBox="0 0 12 8"><path d="M1.5 6.5 L6 2 L10.5 6.5" fill="none" stroke="#111" stroke-width="1.8"/></svg>
<!--BOTTOM-->
<div class="a" style="left:1887px;top:803px;width:26px;height:216px;background:#fdfdfd;border-left:1px solid #f1f1f1"></div>
<svg class="a" style="left:52px;top:810px" width="16" height="18" viewBox="0 0 16 18"><path d="M1.6 17.5 C1.6 13.8 3.6 12.3 5.7 11.6 L8 13.5 L10.3 11.6 C12.4 12.3 14.4 13.8 14.4 17.5Z" fill="#546e7a"/><path d="M6 11.5 L8 14 L10 11.5 L8 10.5Z" fill="#fff"/><path d="M7.4 12.6 H8.6 L9 17.5 L7 17.5Z" fill="#e57393"/><ellipse cx="8" cy="6.3" rx="4" ry="4.8" fill="#ffb74d"/><path d="M3.8 5.5 C3.5 2 5.5 .5 8 .5 C10.5 .5 12.5 2 12.2 5.5 C11 4.5 9.5 3.6 8 3.6 C6.5 3.6 5 4.5 3.8 5.5Z" fill="#5d4037"/></svg>
<div class="t" style="transform:scaleX(0.8647);left:74.5px;top:811px;color:#777" id="bt1">ANSPRECHPARTNER (5)</div>
<svg class="a x" style="left:216px;top:814px" width="9" height="9" viewBox="0 0 10 10"><path d="M1.5 1.5 L8.5 8.5 M8.5 1.5 L1.5 8.5" stroke="#2e4799" stroke-width="2.4"/></svg>
<svg class="a" style="left:246px;top:810px" width="15" height="18" viewBox="0 0 28 36"><use href="#clipchk"/></svg>
<div class="t" style="transform:scaleX(0.8771);left:268.1px;top:811px;color:#14182e" id="bt2">AKTIVITÄTEN (1)</div>
<svg class="a x" style="left:368px;top:814px" width="9" height="9" viewBox="0 0 10 10"><path d="M1.5 1.5 L8.5 8.5 M8.5 1.5 L1.5 8.5" stroke="#2e4799" stroke-width="2.4"/></svg>
<div class="tabu" style="left:239px;top:834px;width:149px"></div>
<svg class="a" style="left:396px;top:810px" width="19" height="17" viewBox="0 0 19 17"><use href="#prj"/></svg>
<div class="t" style="transform:scaleX(0.8431);left:419.5px;top:811px;color:#777" id="bt3">PROJEKTE (1)</div>
<svg class="a x" style="left:504px;top:814px" width="9" height="9" viewBox="0 0 10 10"><path d="M1.5 1.5 L8.5 8.5 M8.5 1.5 L1.5 8.5" stroke="#2e4799" stroke-width="2.4"/></svg>
<svg class="a" style="left:538px;top:812px" width="5" height="15" viewBox="0 0 5 15"><circle cx="2.5" cy="2.3" r="1.5" fill="#3949ab"/><circle cx="2.5" cy="7.3" r="1.5" fill="#3949ab"/><circle cx="2.5" cy="12.3" r="1.5" fill="#3949ab"/></svg>
<div class="t" style="transform:scaleX(0.8283);left:555.0px;top:811px;color:#777" id="bt4">WEITERE BEREICHE</div>
<!--toolbar2-->
<svg class="a" style="left:53px;top:847px" width="19" height="18" viewBox="0 0 19 18"><rect x=".5" y=".5" width="15" height="12" fill="#e3f2fd" stroke="#90caf9" stroke-width="1"/><rect x=".5" y=".5" width="15" height="3.2" fill="#64b5f6"/><rect x="1" y="4.4" width="14" height="1.6" fill="#66bb6a"/><path d="M.5 7.5 H15.5 M.5 10 H15.5 M5.5 3.5 V12.5 M10.5 3.5 V12.5" stroke="#bbdefb" stroke-width=".9"/><circle cx="13.3" cy="12.6" r="4.8" fill="#2e7d32"/><path d="M13.3 9.9 V15.3 M10.6 12.6 H16" stroke="#fff" stroke-width="1.5"/></svg>
<svg class="a dd" style="left:80px;top:853px" width="9" height="5" viewBox="0 0 10 6"><path d="M0.5 0.5 L9.5 0.5 L5 5.5Z" fill="#2e4799"/></svg>
<div class="a vsep" style="left:99px;top:849px"></div>
<svg class="a" style="left:114px;top:847px" width="19" height="18" viewBox="0 0 19 18"><rect x="1" y="1" width="12.5" height="10.5" fill="#fff" stroke="#3f51b5" stroke-width="1.2"/><path d="M1 3.2 H5 M1 5.6 H5 M1 8 H5 M1 10.4 H5" stroke="#3f51b5" stroke-width="1.4"/><circle cx="11.5" cy="10.2" r="3.6" fill="#90caf9" stroke="#5c9bd6" stroke-width="1"/><path d="M14.3 13 L17.8 16.5" stroke="#546e7a" stroke-width="1.9" stroke-linecap="round"/></svg>
<svg class="a" style="left:147px;top:850px" width="14" height="12" viewBox="0 0 15 13"><path d="M.5 2 H14.5 M.5 6.5 H14.5 M.5 11 H14.5" stroke="#2e4799" stroke-width="1.9"/></svg>
<svg class="a dd" style="left:172px;top:853px" width="9" height="5" viewBox="0 0 10 6"><path d="M0.5 0.5 L9.5 0.5 L5 5.5Z" fill="#2e4799"/></svg>
<div class="a vsep" style="left:192px;top:849px"></div>
<svg class="a" style="left:206px;top:848px" width="19" height="17" viewBox="0 0 19 17"><rect x="6.5" y=".8" width="11.5" height="9.5" fill="#f5faff" stroke="#bbdefb" stroke-width="1"/><path d="M6.5 4 H18 M6.5 7.2 H18 M10.3 .8 V10.3 M14.2 .8 V10.3" stroke="#bbdefb" stroke-width=".9"/><rect x="1" y="6" width="11.5" height="9.6" fill="#f6fbf6" stroke="#43a047" stroke-width="1.3"/><path d="M1 9.2 H12.5 M1 12.4 H12.5 M4.8 6 V15.6 M8.7 6 V15.6" stroke="#a5d6a7" stroke-width=".9"/></svg>
<svg class="a dd" style="left:233px;top:853px" width="9" height="5" viewBox="0 0 10 6"><path d="M0.5 0.5 L9.5 0.5 L5 5.5Z" fill="#2e4799"/></svg>
<svg class="a" style="left:251px;top:849px" width="17" height="13" viewBox="0 0 17 13"><rect x=".8" y=".8" width="4.4" height="4.4" fill="#e8eaf6" stroke="#3f51b5" stroke-width="1.2"/><rect x=".8" y="7.8" width="4.4" height="4.4" fill="#e8eaf6" stroke="#3f51b5" stroke-width="1.2"/><path d="M8 3 H16.5 M8 10 H16.5" stroke="#5c6bc0" stroke-width="1.8"/></svg>
<svg class="a dd" style="left:277px;top:853px" width="9" height="5" viewBox="0 0 10 6"><path d="M0.5 0.5 L9.5 0.5 L5 5.5Z" fill="#2e4799"/></svg>
<div class="a vsep" style="left:296px;top:849px"></div>
<div class="a" style="left:305px;top:843px;width:232px;height:25px;border:1px solid #dcdcdc;border-radius:3px;background:#fff"></div>
<div class="t" style="transform:scaleX(0.9552);left:312.4px;top:848px;color:#111" id="bs1">Standard</div>
<svg class="a dd" style="left:520px;top:853px" width="9" height="5" viewBox="0 0 10 6"><path d="M0.5 0.5 L9.5 0.5 L5 5.5Z" fill="#2e4799"/></svg>
<div class="a" style="left:553px;top:843px;width:594px;height:25px;border:1px solid #dcdcdc;border-radius:3px;background:#fff"></div>
<div class="t" style="transform:scaleX(0.9320);left:559.3px;top:848px;color:#555" id="bs2">Suchen...</div>
<svg class="a" style="left:1125px;top:847px" width="17" height="17" viewBox="0 0 17 17"><circle cx="10.3" cy="6.7" r="4.6" fill="none" stroke="#2e4799" stroke-width="1.6"/><path d="M7 10 L1.5 15.5" stroke="#2e4799" stroke-width="1.9" stroke-linecap="round"/></svg>
<svg class="a" style="left:1827px;top:846.5px" width="18" height="18" viewBox="0 0 18 18"><rect x="5.4" y="1" width="5" height="13" fill="#e3f2fd" stroke="#90caf9" stroke-width=".9"/><path d="M5.4 4.2 H10.4 M5.4 7.4 H10.4 M5.4 10.6 H10.4" stroke="#90caf9" stroke-width=".8"/><rect x="1.2" y="1" width="4.2" height="13" fill="#fff" stroke="#388e3c" stroke-width="1.4"/><path d="M1.2 4.2 H5.4 M1.2 7.4 H5.4 M1.2 10.6 H5.4" stroke="#66bb6a" stroke-width=".8"/><path d="M4 16.5 L12.5 8.8" stroke="#78909c" stroke-width="1.7" stroke-linecap="round"/><path d="M11.8 9.8 C11 8.2 12 6.4 14.2 6.5 L13 7.9 L13.9 8.9 L15.4 7.7 C15.6 9.8 13.6 10.8 11.8 9.8Z" fill="#607d8b"/><path d="M8.8 11.6 L14.3 16.3" stroke="#ffb300" stroke-width="2.6" stroke-linecap="round"/></svg>
<svg class="a" style="left:1858px;top:851px" width="17" height="9" viewBox="0 0 17 9"><path d="M.5 4.5 H7.5" stroke="#90a4ae" stroke-width="1.2"/><rect x="7.2" y=".8" width="1.5" height="7.4" rx=".5" fill="#1e88e5"/><rect x="8.7" y="2.3" width="5.4" height="4.4" fill="#1e88e5"/><rect x="14" y="1.5" width="1.5" height="6" rx=".5" fill="#1e88e5"/></svg>
<!--table-->
<div class="grip" style="left:224px"></div><div class="grip" style="left:352px"></div><div class="grip" style="left:479px"></div><div class="grip" style="left:606px"></div><div class="grip" style="left:734px"></div><div class="grip" style="left:861px"></div><div class="grip" style="left:988px"></div><div class="grip" style="left:1116px"></div><div class="grip" style="left:1243px"></div><div class="grip" style="left:1370px"></div><div class="grip" style="left:1498px"></div><div class="grip" style="left:1625px"></div><div class="grip" style="left:1752px"></div><div class="grip" style="left:1879px"></div>
<div class="t" style="transform:scaleX(0.8961);left:48.2px;top:879px;color:#666" id="h0">Fav.</div><div class="t" style="transform:scaleX(1.0119);left:111.8px;top:879px;color:#666" id="h1">Dok</div><div class="t" style="transform:scaleX(0.9658);left:238.8px;top:879px;color:#666" id="h2">Beginn</div><div class="t" style="transform:scaleX(0.9218);left:366.5px;top:879px;color:#666" id="h3">Ende</div><div class="t" style="transform:scaleX(0.9387);left:493.5px;top:879px;color:#666" id="h4">Status</div><div class="t" style="transform:scaleX(1.0526);left:620.8px;top:879px;color:#666" id="h5">Art</div><div class="t" style="transform:scaleX(0.9878);left:748.1px;top:879px;color:#666" id="h6">Betreff</div><div class="t" style="transform:scaleX(1.0170);left:875.8px;top:879px;color:#666" id="h7">Aktivität mit</div><div class="t" style="transform:scaleX(0.9799);left:1002.7px;top:879px;color:#666" id="h8">Delegiert an</div><div class="t" style="transform:scaleX(0.9829);left:1130.1px;top:879px;color:#666" id="h9">Delegiert von</div><div class="t" style="transform:scaleX(1.0045);left:1256.9px;top:879px;color:#666" id="h10">Priorität</div><div class="t" style="transform:scaleX(0.9736);left:1384.7px;top:879px;color:#666" id="h11">Projekt</div><div class="t" style="transform:scaleX(0.9814);left:1511.8px;top:879px;color:#666" id="h12">Anfrage</div><div class="t" style="transform:scaleX(0.9147);left:1639.3px;top:879px;color:#666" id="h13">Anlass</div><div class="t" style="transform:scaleX(0.9393);left:1766.5px;top:879px;color:#666" id="h14">Ergebnis</div>
<svg class="a dd" style="left:281.5px;top:883px" width="11" height="6.6" viewBox="0 0 10 6"><path d="M0.5 0.5 L9.5 0.5 L5 5.5Z" fill="#2e4799"/></svg>
<svg class="a dd" style="left:397.5px;top:883px" width="11" height="6.6" viewBox="0 0 10 6"><path d="M0.5 0.5 L9.5 0.5 L5 5.5Z" fill="#2e4799"/></svg>
<div class="a" style="left:42px;top:904px;width:1845px;height:32px;background:#c5cfee"></div>
<svg class="a" style="left:49px;top:911px" width="15" height="18" viewBox="0 0 28 36"><use href="#clipchk"/></svg>
<svg class="a dd" style="left:74px;top:917px" width="9" height="5" viewBox="0 0 10 6"><path d="M0.5 0.5 L9.5 0.5 L5 5.5Z" fill="#2e4799"/></svg>
<div class="a" style="left:160px;top:911px;width:18px;height:18px;background:#dfe4f6;border:1px solid #d3d9ef"></div>
<div class="t" style="transform:scaleX(0.9277);left:234.8px;top:913px;color:#1565c0" id="r1">30.10.2025 10:30</div>
<div class="t" style="transform:scaleX(0.9287);left:362.1px;top:913px;color:#1565c0" id="r2">30.10.2025 12:00</div>
<div class="a" style="left:491px;top:913px;width:14px;height:14px;border-radius:7px;border:1.8px solid #8fc7f7"></div>
<div class="t" style="transform:scaleX(1.0074);left:516.5px;top:913px;color:#1565c0" id="r3">O</div>
<svg class="a" style="left:617px;top:915px" width="17" height="11" viewBox="0 0 17 11"><circle cx="3.5" cy="3" r="2" fill="#ffb74d"/><circle cx="8.5" cy="2.4" r="2.2" fill="#ffb74d"/><circle cx="13.5" cy="3" r="2" fill="#ffb74d"/><path d="M.3 9.5 C.3 6.5 2 5.5 3.5 5.5 C5 5.5 5.8 6 6.3 7 C6.8 5.5 7.5 5 8.5 5 C9.5 5 10.2 5.5 10.7 7 C11.2 6 12 5.5 13.5 5.5 C15 5.5 16.7 6.5 16.7 9.5Z" fill="#455a64"/><rect x="0" y="9" width="17" height="1.6" fill="#795548"/></svg>
<div class="t" style="transform:scaleX(0.8484);left:644.1px;top:913px;color:#1565c0" id="r4">BESPRECHUNG</div>
<div class="t" style="transform:scaleX(0.9199);left:743.7px;top:913px;color:#1565c0" id="r5">#PRJ-ITC-0000003 -...</div>
<div class="t" style="transform:scaleX(0.8753);left:998.3px;top:913px;color:#1565c0" id="r6">LGU</div>
<div class="t" style="transform:scaleX(0.8566);left:1125.7px;top:913px;color:#1565c0" id="r7">LGU</div>
<svg class="a" style="left:1255px;top:913px" width="13" height="16" viewBox="0 0 13 16"><path d="M1 .5 V15.5" stroke="#2e7d32" stroke-width="1.4"/><path d="M1.5 1 L12 6 L1.5 11Z" fill="#43a047"/></svg>
<div class="t" style="transform:scaleX(0.8879);left:1280.4px;top:913px;color:#1565c0" id="r8">B</div>
<svg class="a" style="left:1906px;top:912px" width="8" height="12" viewBox="0 0 8 12"><path d="M6.5 1.5 L2 6 L6.5 10.5" fill="none" stroke="#111" stroke-width="1.8"/></svg>
<div class="hl" style="left:42px;top:1006px;width:1845px;background:#dcdcdc"></div>
<div class="t" style="transform:scaleX(0.9580);left:907.5px;top:1012px;color:#111" id="ft">1 Eintrag (1 ausgewählt)</div>
<!--END-->
</body></html>
